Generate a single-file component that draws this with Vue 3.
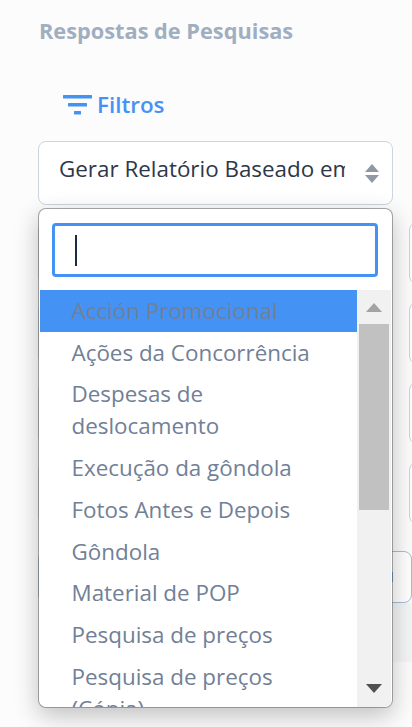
<template>
  <div class="page">
    <h1 class="title">Respostas de Pesquisas</h1>

    <div class="filters">
      <svg class="filter-icon" viewBox="0 0 29 20" width="29" height="20">
        <rect x="0" y="0" width="29" height="3.5" rx="0.5" />
        <rect x="5" y="8" width="19" height="3.5" rx="0.5" />
        <rect x="11" y="16" width="7" height="3.5" rx="0.5" />
      </svg>
      <span class="filters-label">Filtros</span>
    </div>

    <div class="select-wrap">
      <div class="select">
        <span class="select-text">Gerar Relatório Baseado em Pesquisa</span>
        <svg class="select-arrows" viewBox="0 0 14 19" width="14" height="19">
          <path d="M7 0 L14 8 H0 Z" />
          <path d="M0 11 H14 L7 19 Z" />
        </svg>
      </div>

      <div class="dropdown">
        <div class="search-box">
          <div class="search-input"><span class="caret"></span></div>
        </div>
        <div class="results">
          <ul class="options">
            <li
              v-for="(opt, i) in options"
              :key="opt"
              class="option"
              :class="{ active: i === 0 }"
            >
              {{ opt }}
            </li>
          </ul>
          <div class="scrollbar">
            <svg class="arrow-up" viewBox="0 0 16 9" width="16" height="9"><path d="M8 0 L16 9 H0 Z" /></svg>
            <div class="thumb"></div>
            <svg class="arrow-down" viewBox="0 0 16 9" width="16" height="9"><path d="M0 0 H16 L8 9 Z" /></svg>
          </div>
        </div>
      </div>
    </div>

    <div class="fields">
      <div v-for="n in 8" :key="n" class="field"></div>
    </div>

    <div class="apply"><span class="apply-text"></span></div>
    <div class="band"></div>
  </div>
</template>

<script setup>
const options = [
  'Acción Promocional',
  'Ações da Concorrência',
  'Despesas de deslocamento',
  'Execução da gôndola',
  'Fotos Antes e Depois',
  'Gôndola',
  'Material de POP',
  'Pesquisa de preços',
  'Pesquisa de preços (Cópia)',
  'Sell Out'
]
</script>

<style>
html,
body {
  margin: 0;
  height: 100%;
  overflow: hidden;
  background: #fcfcfd;
}
</style>

<style scoped>
.page {
  width: 412px;
  height: 727px;
  overflow: hidden;
  padding: 0 0 0 38px;
  box-sizing: border-box;
  font-family: "Open Sans", "Noto Sans", sans-serif;
  background: #fcfcfd;
}

.title {
  margin: 0;
  padding: 17px 0 0 1px;
  font-size: 21.76px;
  line-height: 28px;
  font-weight: 700;
  color: #a0aec0;
}

.filters {
  display: flex;
  align-items: center;
  gap: 5px;
  margin: 46px 0 0 25px;
  height: 28px;
  font-size: 22.4px;
  font-weight: 600;
  color: #4592f5;
}

.filters-label {
  margin-top: -2px;
}

.filter-icon {
  fill: #4592f5;
}

.select-wrap {
  position: relative;
  margin-top: 22px;
  width: 355px;
}

.select {
  display: flex;
  align-items: center;
  height: 64px;
  box-sizing: border-box;
  padding: 0 20px;
  background: #fff;
  border: 1px solid #cbd5e0;
  border-radius: 8px;
  font-size: 22.4px;
  color: #2d3748;
}

.select-text {
  flex: 1;
  overflow: hidden;
  white-space: nowrap;
  margin-top: -10px;
}

.select-arrows {
  fill: #8f98a3;
  margin: 0 -7px 0 20px;
}

.dropdown {
  position: absolute;
  top: 67px;
  left: 0;
  width: 355px;
  height: 500px;
  box-sizing: border-box;
  padding: 0 1px 1px;
  background: #fff;
  background-clip: padding-box;
  border: 1px solid rgba(110, 110, 110, 0.6);
  border-radius: 8px;
  box-shadow: 0 8px 24px rgba(0, 0, 0, 0.24);
  overflow: hidden;
  z-index: 10;
}

.search-box {
  padding: 14px 13px 13px 12px;
}

.search-input {
  display: flex;
  align-items: center;
  height: 54px;
  box-sizing: border-box;
  padding-left: 20px;
  border: 3px solid #4592f5;
  border-radius: 4px;
}

.caret {
  width: 2px;
  height: 31px;
  background: #1a2a44;
}

.results {
  display: flex;
  height: 417px;
}

.options {
  flex: 1;
  margin: 0;
  padding: 0;
  list-style: none;
  overflow: hidden;
}

.option {
  padding: 4.875px 31px 4.875px 31.5px;
  font-size: 22.4px;
  line-height: 32px;
  color: #718096;
}

.option.active {
  background: #4592f5;
}

.scrollbar {
  position: relative;
  width: 34px;
  background: #f1f1f1;
}

.thumb {
  position: absolute;
  top: 34px;
  left: 2px;
  width: 30px;
  height: 186px;
  background: #c1c1c1;
}

.arrow-up,
.arrow-down {
  position: absolute;
  left: 9px;
}

.arrow-up {
  top: 13px;
  fill: #a3a3a3;
}

.arrow-down {
  bottom: 14px;
  fill: #505050;
}

.fields {
  display: grid;
  grid-template-columns: 354px 354px;
  gap: 18px 17px;
  margin-top: 17px;
}

.field {
  height: 62px;
  box-sizing: border-box;
  background: #fff;
  border: 1px solid #cbd5e0;
  border-radius: 8px;
}

.apply {
  display: flex;
  justify-content: flex-end;
  align-items: center;
  height: 52px;
  box-sizing: border-box;
  margin-top: 27px;
  padding-right: 18px;
  background: #fff;
  border: 1px solid #a9bcd4;
  border-radius: 8px;
  width: 374px;
}

.apply-text {
  width: 1px;
  height: 10px;
  background: #4592f5;
}

.band {
  height: 59px;
  margin-left: 1px;
  background: #f4f5f6;
}
</style>
